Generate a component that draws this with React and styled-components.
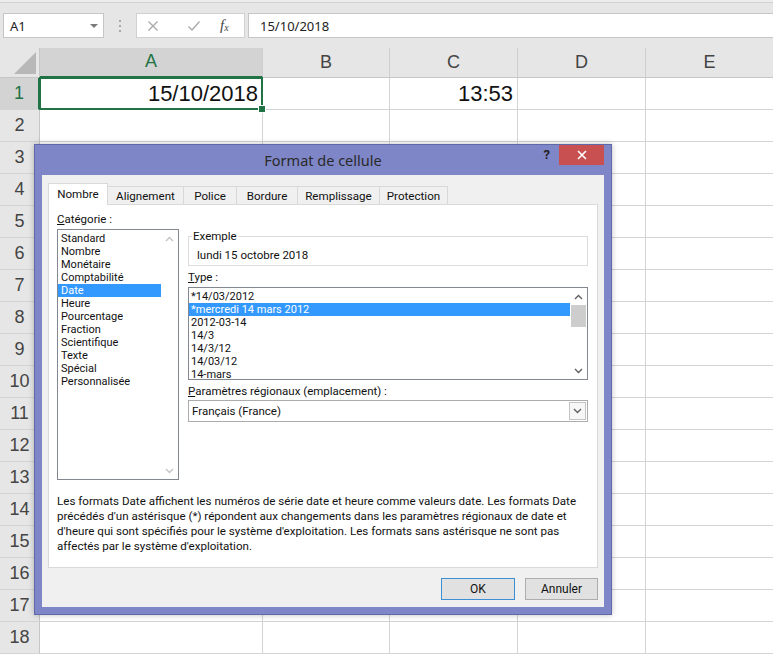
import React from 'react';
import styled, { createGlobalStyle } from 'styled-components';

const Global = createGlobalStyle`
  html, body { margin: 0; padding: 0; background: #fff; overflow: hidden; }
  body { font-family: "Noto Sans", "Liberation Sans", sans-serif; }
  * { box-sizing: border-box; }
`;

const Page = styled.div`
  position: relative;
  width: 773px;
  height: 655px;
  overflow: hidden;
  background: #fff;
`;

/* ---------- formula bar ---------- */
const FormulaBar = styled.div`
  height: 48px;
  background: linear-gradient(#ececec 0 2px, #d2d2d2 2px 3px, #e6e6e6 3px);
  display: flex;
  align-items: flex-start;
  padding: 13px 0 0 3px;
`;
const NameBox = styled.div`
  width: 101px;
  height: 25px;
  background: #fff;
  border: 1px solid #c6c6c6;
  display: flex;
  align-items: center;
  justify-content: space-between;
  padding: 0 5px 0 6px;
  font-size: 13px;
  color: #222;
`;
const Caret = styled.span`
  width: 0;
  height: 0;
  border-left: 4px solid transparent;
  border-right: 4px solid transparent;
  border-top: 4px solid #7a7a7a;
`;
const Grip = styled.div`
  width: 32px;
  height: 25px;
  display: flex;
  flex-direction: column;
  align-items: center;
  justify-content: center;
  gap: 3px;
  span { width: 2px; height: 2px; background: #a8a8a8; }
`;
const FxBox = styled.div`
  width: 109px;
  height: 25px;
  background: #fff;
  border: 1px solid #d0d0d0;
  display: flex;
  align-items: center;
  padding-left: 10px;
  gap: 17px;
`;
const FxText = styled.span`
  font-family: "Liberation Serif", serif;
  font-style: italic;
  font-size: 15px;
  color: #444;
  margin-left: 2px;
  sub { font-size: 10px; vertical-align: -1px; }
`;
const FormulaInput = styled.div`
  flex: 1;
  height: 25px;
  margin-left: 3px;
  background: #fff;
  border: 1px solid #c6c6c6;
  border-right: none;
  display: flex;
  align-items: center;
  padding-left: 11px;
  font-size: 13px;
  color: #222;
`;

/* ---------- sheet grid ---------- */
const Sheet = styled.div`
  display: grid;
  grid-template-columns: 40px 223px 127px 128px 128px 128px;
  grid-template-rows: 30px;
  grid-auto-rows: 32px;
  font-family: "Liberation Sans", sans-serif;
`;
const Corner = styled.div`
  background: #e6e6e6;
  border-right: 1px solid #c6c6c6;
  border-bottom: 1px solid #c6c6c6;
  display: flex;
  align-items: flex-end;
  justify-content: flex-end;
  padding: 0 3px 3px 0;
  span {
    width: 0; height: 0;
    border-left: 22px solid transparent;
    border-bottom: 22px solid #b8b8b8;
  }
`;
const ColHead = styled.div`
  background: ${p => (p.$sel ? '#d3d3d3' : '#e6e6e6')};
  color: ${p => (p.$sel ? '#217346' : '#444')};
  border-right: 1px solid #cfcfcf;
  border-bottom: ${p => (p.$sel ? '2px solid #217346' : '1px solid #c6c6c6')};
  display: flex;
  align-items: center;
  justify-content: center;
  font-size: 18px;
  padding-bottom: 1px;
`;
const RowHead = styled.div`
  background: ${p => (p.$sel ? '#d3d3d3' : '#e6e6e6')};
  color: ${p => (p.$sel ? '#217346' : '#444')};
  border-right: ${p => (p.$sel ? '2px solid #217346' : '1px solid #c6c6c6')};
  border-bottom: 1px solid #d4d4d4;
  display: flex;
  align-items: center;
  justify-content: center;
  font-size: 18px;
`;
const Cell = styled.div`
  position: relative;
  border-right: 1px solid #d4d4d4;
  border-bottom: 1px solid #d4d4d4;
  display: flex;
  align-items: center;
  justify-content: flex-end;
  padding-right: 4px;
  font-size: 22px;
  color: #111;
  ${p => p.$sel && `
    &::after {
      content: '';
      position: absolute;
      inset: -1px -1px -1px -1px;
      border: 2px solid #217346;
      pointer-events: none;
    }
    &::before {
      content: '';
      position: absolute;
      right: -4px; bottom: -4px;
      width: 6px; height: 6px;
      background: #217346;
      border: 1px solid #fff;
      z-index: 1;
    }
  `}
`;

/* ---------- dialog ---------- */
const Dialog = styled.div`
  position: absolute;
  left: 34px;
  top: 144px;
  width: 578px;
  height: 471px;
  background: #7e86c7;
  border: 1px solid #6168a8;
  box-shadow: 0 0 6px rgba(0,0,0,0.25);
  display: flex;
  flex-direction: column;
  padding: 0 7px 7px;
  font-family: Roboto, "Noto Sans", sans-serif;
`;
const TitleBar = styled.div`
  height: 30px;
  display: grid;
  grid-template-columns: 1fr auto 1fr;
  align-items: start;
`;
const Title = styled.div`
  grid-column: 2;
  font-family: "Noto Sans", sans-serif;
  font-size: 14.5px;
  color: #2a2a2a;
  line-height: 31px;
`;
const TitleCtrls = styled.div`
  grid-column: 3;
  justify-self: end;
  display: flex;
  align-items: flex-start;
  gap: 9px;
`;
const Help = styled.div`
  font-size: 13px;
  font-weight: bold;
  color: #222;
  line-height: 20px;
`;
const Close = styled.div`
  width: 45px;
  height: 20px;
  background: #c85050;
  display: flex;
  align-items: center;
  justify-content: center;
`;
const Body = styled.div`
  flex: 1;
  background: #f0f0f0;
  padding: 8px 6px 0;
  font-size: 11.5px;
  color: #111;
`;
const TabStrip = styled.div`
  display: flex;
  align-items: flex-end;
  height: 21px;
`;
const Tab = styled.div`
  position: relative;
  width: ${p => p.$w}px;
  height: ${p => (p.$active ? 22 : 18)}px;
  margin-bottom: ${p => (p.$active ? -1 : 0)}px;
  margin-right: -1px;
  background: ${p => (p.$active ? '#fff' : '#f0f0f0')};
  border: 1px solid #d9d9d9;
  border-bottom: none;
  z-index: ${p => (p.$active ? 2 : 1)};
  display: flex;
  align-items: center;
  justify-content: center;
  padding-bottom: ${p => (p.$active ? 2 : 0)}px;
  font-size: 11.6px;
`;
const Panel = styled.div`
  height: 364px;
  background: #fff;
  border: 1px solid #d9d9d9;
  padding: 6px 8px 0;
  display: flex;
  flex-direction: column;
`;
const Upper = styled.div`
  display: grid;
  grid-template-columns: 122px 400px;
  column-gap: 9px;
  align-items: start;
`;
const Col = styled.div`
  display: flex;
  flex-direction: column;
`;
const Label = styled.div`
  line-height: 16px;
  margin-top: ${p => p.$mt || 0}px;
  u { text-decoration: underline; text-underline-offset: 1px; }
`;
const ListBox = styled.div`
  height: ${p => p.$h}px;
  margin-top: 2px;
  border: 1px solid #828790;
  background: #fff;
  display: flex;
  overflow: hidden;
`;
const Items = styled.div`
  flex: 1;
  padding-top: ${p => p.$pt || 0}px;
  font-size: 11px;
`;
const Item = styled.div`
  height: 13px;
  line-height: 13px;
  padding-left: ${p => p.$pl || 3}px;
  background: ${p => (p.$sel ? '#3399ff' : 'transparent')};
  color: ${p => (p.$sel ? '#fff' : '#111')};
  white-space: nowrap;
`;
const ScrollBar = styled.div`
  width: 17px;
  background: #fff;
  display: flex;
  flex-direction: column;
`;
const ScrollBtn = styled.div`
  height: 17px;
  display: flex;
  align-items: center;
  justify-content: center;
`;
const Track = styled.div`
  flex: 1;
  padding: 0 1px;
`;
const Thumb = styled.div`
  height: 22px;
  background: #cdcdcd;
`;
const Fieldset = styled.fieldset`
  margin: 18px 0 0;
  padding: 5px 8px 3px;
  border: 1px solid #dcdcdc;
  min-width: 0;
  legend {
    padding: 0 1px;
    margin-left: -5px;
    line-height: 14px;
  }
  div { line-height: 14px; }
`;
const Select = styled.div`
  height: 22px;
  margin-top: 1px;
  border: 1px solid #acacac;
  background: #fff;
  display: flex;
  align-items: center;
  padding: 0 1px 0 3px;
`;
const SelectValue = styled.div`
  flex: 1;
`;
const DropBtn = styled.div`
  width: 17px;
  height: 18px;
  border: 1px solid #c4c4c4;
  background: #f7f7f7;
  display: flex;
  align-items: center;
  justify-content: center;
`;
const Description = styled.div`
  margin-top: 14px;
  line-height: 15px;
  font-size: 11.6px;
  div { white-space: nowrap; }
`;
const Footer = styled.div`
  display: flex;
  justify-content: flex-end;
  gap: 10px;
  margin-top: 10px;
`;
const Button = styled.div`
  width: ${p => p.$w}px;
  height: 22px;
  background: #e1e1e1;
  border: 1px solid ${p => (p.$default ? '#3d8fd4' : '#adadad')};
  display: flex;
  align-items: center;
  justify-content: center;
  font-size: 12px;
`;

const Chevron = ({ dir = 'up', color = '#606060' }) => (
  <svg width="9" height="6" viewBox="0 0 9 6">
    <path
      d={dir === 'up' ? 'M1 5 L4.5 1.5 L8 5' : 'M1 1 L4.5 4.5 L8 1'}
      fill="none"
      stroke={color}
      strokeWidth="1.4"
    />
  </svg>
);

const cols = ['A', 'B', 'C', 'D', 'E'];
const rows = Array.from({ length: 18 }, (_, i) => i + 1);
const categories = ['Standard', 'Nombre', 'Monétaire', 'Comptabilité', 'Date', 'Heure', 'Pourcentage', 'Fraction', 'Scientifique', 'Texte', 'Spécial', 'Personnalisée'];
const types = ['*14/03/2012', '*mercredi 14 mars 2012', '2012-03-14', '14/3', '14/3/12', '14/03/12', '14-mars'];
const tabs = [['Nombre', 60], ['Alignement', 77], ['Police', 54], ['Bordure', 62], ['Remplissage', 83], ['Protection', 69]];

export default function App() {
  return (
    <Page>
      <Global />
      <FormulaBar>
        <NameBox>A1<Caret /></NameBox>
        <Grip><span /><span /><span /></Grip>
        <FxBox>
          <svg width="12" height="12" viewBox="0 0 12 12">
            <path d="M1.5 1.5 L10.5 10.5 M10.5 1.5 L1.5 10.5" stroke="#a8a8a8" strokeWidth="1.3" fill="none" />
          </svg>
          <svg width="14" height="12" viewBox="0 0 14 12" style={{ marginLeft: 11 }}>
            <path d="M1.5 6.5 L5 10 L12.5 1.5" stroke="#a8a8a8" strokeWidth="1.3" fill="none" />
          </svg>
          <FxText>f<sub>x</sub></FxText>
        </FxBox>
        <FormulaInput>15/10/2018</FormulaInput>
      </FormulaBar>

      <Sheet>
        <Corner><span /></Corner>
        {cols.map(c => <ColHead key={c} $sel={c === 'A'}>{c}</ColHead>)}
        {rows.map(r => (
          <React.Fragment key={r}>
            <RowHead $sel={r === 1}>{r}</RowHead>
            {cols.map(c => (
              <Cell key={c} $sel={r === 1 && c === 'A'}>
                {r === 1 && c === 'A' ? '15/10/2018' : r === 1 && c === 'C' ? '13:53' : ''}
              </Cell>
            ))}
          </React.Fragment>
        ))}
      </Sheet>

      <Dialog>
        <TitleBar>
          <Title>Format de cellule</Title>
          <TitleCtrls>
            <Help>?</Help>
            <Close>
              <svg width="10" height="10" viewBox="0 0 10 10">
                <path d="M1 1 L9 9 M9 1 L1 9" stroke="#fff" strokeWidth="1.6" fill="none" />
              </svg>
            </Close>
          </TitleCtrls>
        </TitleBar>
        <Body>
          <TabStrip>
            {tabs.map(([t, w], i) => <Tab key={t} $w={w} $active={i === 0}>{t}</Tab>)}
          </TabStrip>
          <Panel>
            <Upper>
              <Col>
                <Label><u>C</u>atégorie :</Label>
                <ListBox $h={251}>
                  <Items $pt={2}>
                    {categories.map(c => <Item key={c} $sel={c === 'Date'}>{c}</Item>)}
                  </Items>
                  <ScrollBar>
                    <ScrollBtn><Chevron dir="up" color="#c4c4c4" /></ScrollBtn>
                    <Track />
                    <ScrollBtn><Chevron dir="down" color="#c4c4c4" /></ScrollBtn>
                  </ScrollBar>
                </ListBox>
              </Col>
              <Col>
                <Fieldset>
                  <legend>Exemple</legend>
                  <div>lundi 15 octobre 2018</div>
                </Fieldset>
                <Label $mt={3}><u>T</u>ype :</Label>
                <ListBox $h={93}>
                  <Items $pt={2}>
                    {types.map((t, i) => <Item key={t} $pl={2} $sel={i === 1}>{t}</Item>)}
                  </Items>
                  <ScrollBar>
                    <ScrollBtn><Chevron dir="up" /></ScrollBtn>
                    <Track><Thumb /></Track>
                    <ScrollBtn><Chevron dir="down" /></ScrollBtn>
                  </ScrollBar>
                </ListBox>
                <Label $mt={3}><u>P</u>aramètres régionaux (emplacement) :</Label>
                <Select>
                  <SelectValue>Français (France)</SelectValue>
                  <DropBtn><Chevron dir="down" /></DropBtn>
                </Select>
              </Col>
            </Upper>
            <Description>
              <div>Les formats Date affichent les numéros de série date et heure comme valeurs date. Les formats Date</div>
              <div>précédés d'un astérisque (*) répondent aux changements dans les paramètres régionaux de date et</div>
              <div>d'heure qui sont spécifiés pour le système d'exploitation. Les formats sans astérisque ne sont pas</div>
              <div>affectés par le système d'exploitation.</div>
            </Description>
          </Panel>
          <Footer>
            <Button $w={74} $default>OK</Button>
            <Button $w={73}>Annuler</Button>
          </Footer>
        </Body>
      </Dialog>
    </Page>
  );
}
